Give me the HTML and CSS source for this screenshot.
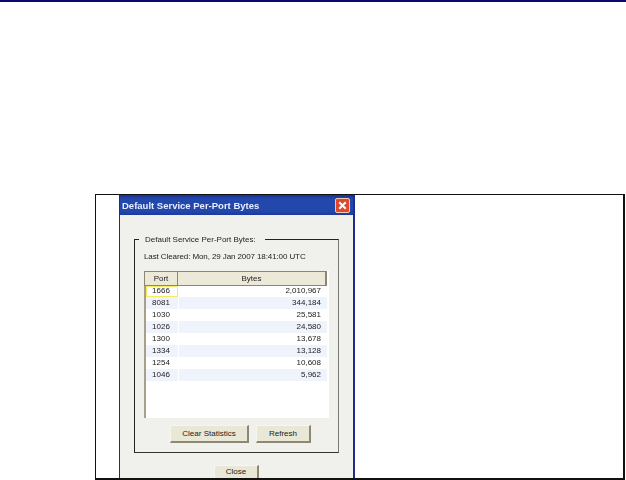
FILE: index.html
```html
<!DOCTYPE html>
<html lang="en">
<head>
<meta charset="utf-8">
<title>Default Service Per-Port Bytes</title>
<link rel="stylesheet" href="styles.css">
</head>
<body>
<div class="topbar"></div>
<div class="frame">
  <div class="dialog">
    <div class="titlebar">
      <span class="title">Default Service Per-Port Bytes</span>
      <span class="close-x">
        <svg width="14" height="14" viewBox="0 0 14 14"><path d="M3.5 3.5l7 7M10.500 3.500l-7 7" stroke="#fff" stroke-width="2.200" fill="none"/></svg>
      </span>
    </div>
    <div class="content">
      <fieldset class="group">
        <legend class="legend">Default Service Per-Port Bytes:</legend>
        <div class="cleared">Last Cleared: Mon, 29 Jan 2007 18:41:00 UTC</div>
        <div class="list">
          <div class="row head"><div class="port">Port</div><div class="bytes">Bytes</div></div>
          <div class="row selected"><div class="port">1666</div><div class="bytes">2,010,967</div></div>
          <div class="row alt"><div class="port">8081</div><div class="bytes">344,184</div></div>
          <div class="row"><div class="port">1030</div><div class="bytes">25,581</div></div>
          <div class="row alt"><div class="port">1026</div><div class="bytes">24,580</div></div>
          <div class="row"><div class="port">1300</div><div class="bytes">13,678</div></div>
          <div class="row alt"><div class="port">1334</div><div class="bytes">13,128</div></div>
          <div class="row"><div class="port">1254</div><div class="bytes">10,608</div></div>
          <div class="row alt"><div class="port">1046</div><div class="bytes">5,962</div></div>
        </div>
        <div class="actions">
          <button class="btn btn-clear" type="button">Clear Statistics</button>
          <button class="btn btn-refresh" type="button">Refresh</button>
        </div>
      </fieldset>
      <div class="footer"><button class="btn btn-close" type="button">Close</button></div>
    </div>
  </div>
</div>
</body>
</html>
```
FILE: styles.css
```css
html, body {
  margin: 0;
  padding: 0;
  height: 480px;
  overflow: hidden;
  background: #fff;
}
body {
  font-family: "Liberation Sans", Arial, sans-serif;
  font-size: 8px;
  color: #222;
}
.topbar {
  height: 2px;
  background: #0a0a6e;
  margin-bottom: 192px;
}
.frame {
  box-sizing: border-box;
  margin-left: 95px;
  width: 530px;
  height: 286px;
  border: 1px solid #111;
  border-right-width: 2px;
  border-bottom-width: 2px;
  padding-left: 23px;
  overflow: hidden;
}
.dialog {
  box-sizing: border-box;
  width: 236px;
  height: 284px;
  background: #f0f0ec;
  border-left: 1px solid #1c2c90;
  border-right: 2px solid #1c2c90;
  overflow: hidden;
}
.titlebar {
  display: flex;
  align-items: center;
  justify-content: space-between;
  height: 20px;
  padding: 0 3px 0 2px;
  background: linear-gradient(#1a2f94, #2348ac 20%, #2348ac 80%, #1c3a9c);
}
.title {
  color: #e8eeff;
  font-size: 9.5px;
  font-weight: bold;
  filter: blur(0.35px);
}
.close-x {
  display: flex;
  width: 15px;
  height: 15px;
  align-items: center;
  justify-content: center;
  background: #e0482c;
  border: 1px solid #f0c8b8;
  border-radius: 2px;
  box-sizing: border-box;
}
.close-x svg { width: 13px; height: 13px; }
.content {
  padding: 0 0 0 14px;
}
.group {
  box-sizing: border-box;
  width: 205px;
  height: 219px;
  margin: 19px 0 0;
  padding: 6px 9px 0 9px;
  border: 1px solid #222;
  border-right: 1px solid #777;
  border-bottom: 1px solid #333;
  min-width: 0;
}
.legend {
  margin-left: -5px;
  padding: 0 9px 0 6px;
  line-height: 11px;
  filter: blur(0.35px);
}
.cleared {
  line-height: 12px;
  white-space: nowrap;
  letter-spacing: -0.1px;
  filter: blur(0.35px);
}
.list {
  box-sizing: border-box;
  width: 185px;
  height: 147px;
  margin-top: 8px;
  background: #fff;
  border-left: 2px solid #a4a08c;
}
.row {
  display: grid;
  grid-template-columns: 32px 148px;
  gap: 1px;
  height: 12px;
  line-height: 11px;
  filter: blur(0.35px);
}
.row.alt .port, .row.alt .bytes { background: #eff3fb; }
.port { text-align: center; padding-right: 2px; box-sizing: border-box; }
.bytes { text-align: right; padding-right: 6px; box-sizing: border-box; }
.head {
  height: 15px;
  line-height: 13px;
  margin-left: -2px;
  background: #8a8674;
  padding: 1px 0 2px 1px;
  box-sizing: border-box;
  width: 183px;
  grid-template-columns: 32px 147px;
}
.head .port, .head .bytes {
  background: #ece9d8;
  text-align: center;
  padding: 0;
}
.selected {
  height: 11px;
  line-height: 10px;
}
.selected .port {
  box-sizing: border-box;
  border: 1px solid #f4ec60;
  line-height: 8px;
}
.actions {
  display: flex;
  gap: 7px;
  margin-top: 7px;
  padding-left: 26px;
}
.btn {
  box-sizing: border-box;
  height: 18px;
  padding: 0 0 1px;
  font-family: inherit;
  font-size: 8px;
  color: #222;
  background: #e9e7d6;
  border-style: solid;
  border-width: 1px 2px 2px 1px;
  border-color: #f8f6ec #8c8874 #8c8874 #f8f6ec;
}
.btn-clear { width: 79px; }
.btn-refresh { width: 55px; }
.footer {
  display: flex;
  justify-content: center;
  margin: 12px 0 0 -14px;
}
.btn-close { width: 45px; padding-bottom: 4px; }
```
